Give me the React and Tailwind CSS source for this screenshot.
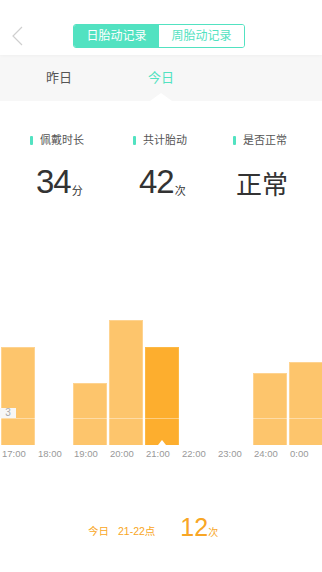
import React from 'react'

const bars = [
  { label: '17:00', h: 98 },
  { label: '18:00', h: 0 },
  { label: '19:00', h: 62 },
  { label: '20:00', h: 125 },
  { label: '21:00', h: 98, active: true },
  { label: '22:00', h: 0 },
  { label: '23:00', h: 0 },
  { label: '24:00', h: 72 },
  { label: '0:00', h: 83 },
]

const Stat = ({ label, value, unit }) => (
  <div className="flex flex-col">
    <div className="flex items-center h-[12px]">
      <span className="w-[3px] h-[9px] bg-[#52e2c1] rounded-[1px]" />
      <span className="ml-[7px] text-[11px] leading-none text-[#555]">{label}</span>
    </div>
    <div className="mt-[22px] pl-[6px] flex items-end h-[30px] text-[#333]">
      <span className="text-[33px] leading-none tracking-[-1px]">{value}</span>
      {unit && <span className="ml-[1px] text-[11px] leading-none mb-[1px]">{unit}</span>}
    </div>
  </div>
)

export default function App() {
  return (
    <div className="w-[322px] h-[572px] bg-white overflow-hidden" style={{ fontFamily: '"Liberation Sans", "Noto Sans CJK SC", sans-serif' }}>
      {/* header */}
      <div className="h-[55px] flex pt-[24px] shadow-[0_1px_3px_rgba(0,0,0,0.03)] relative z-10 bg-white">
        <svg width="12" height="20" viewBox="0 0 12 20" className="ml-[11px] mt-[2px]">
          <path d="M11 1 L2 10 L11 19" fill="none" stroke="#cfcfcf" strokeWidth="1.2" />
        </svg>
        <div className="ml-[50px] flex h-[24px] w-[172px] rounded-[3px] border border-[#52e2c1] overflow-hidden">
          <div className="flex-1 bg-[#52e2c1] text-white text-[12px] flex items-center justify-center">日胎动记录</div>
          <div className="flex-1 bg-white text-[#52e2c1] text-[12px] flex items-center justify-center">周胎动记录</div>
        </div>
      </div>

      {/* tabs */}
      <div className="h-[46px] bg-[#f7f7f7] flex pl-[8px] relative">
        <div className="w-[102px] flex items-center justify-center text-[13px] text-[#555]">昨日</div>
        <div className="w-[102px] flex items-center justify-center text-[13px] text-[#52e2c1] relative">
          今日
          <div className="absolute bottom-0 left-1/2 -translate-x-1/2 w-0 h-0 border-l-[11px] border-r-[11px] border-b-[8px] border-l-transparent border-r-transparent border-b-white" />
        </div>
      </div>

      {/* stats */}
      <div className="flex pt-[33px] pl-[30px]">
        <div className="w-[103px]"><Stat label="佩戴时长" value="34" unit="分" /></div>
        <div className="w-[100px]"><Stat label="共计胎动" value="42" unit="次" /></div>
        <div className="flex flex-col">
          <div className="flex items-center h-[12px]">
            <span className="w-[3px] h-[9px] bg-[#52e2c1] rounded-[1px]" />
            <span className="ml-[7px] text-[11px] leading-none text-[#555]">是否正常</span>
          </div>
          <div className="mt-[22px] pl-[3px] flex items-end h-[30px] text-[#333]">
            <span className="text-[26px] leading-none">正常</span>
          </div>
        </div>
      </div>

      {/* chart */}
      <div className="mt-[102px] relative">
        <div className="h-[145px] flex items-end">
          {bars.map((b) => (
            <div key={b.label} className="w-[36px] shrink-0 pl-[1px] pr-[1px] flex items-end h-full">
              {b.h > 0 && (
                <div
                  className={
                    b.active
                      ? 'w-full bg-[#fdae2e] border-t border-x border-[#fdb945] relative'
                      : 'w-full bg-[#fdc56c] border-t border-x border-[#fed390]'
                  }
                  style={{ height: b.h }}
                >
                  {b.active && (
                    <div className="absolute bottom-0 left-1/2 -translate-x-1/2 w-0 h-0 border-l-[4px] border-r-[4px] border-b-[5px] border-l-transparent border-r-transparent border-b-white" />
                  )}
                </div>
              )}
            </div>
          ))}
        </div>
        <div className="absolute left-0 right-0 top-[118px] h-[1px] bg-white/40" />
        <div className="absolute left-0 top-[108px] w-[16px] h-[10px] bg-[#f7f7f7] text-[10px] leading-[10px] text-[#aaa] text-center">3</div>
        <div className="flex mt-[2px]">
          {bars.map((b) => (
            <div key={b.label} className="w-[36px] shrink-0 pl-[2px] text-[9.5px] text-[#999] font-light">{b.label}</div>
          ))}
        </div>
      </div>

      {/* selection */}
      <div className="mt-[54px] flex items-end pl-[88px] text-[#f8a625]">
        <span className="text-[10.5px] leading-none mb-[4px]">今日</span>
        <span className="ml-[9px] text-[10.5px] leading-none mb-[4px]">21-22点</span>
        <span className="ml-[25px] text-[25px] leading-none">12</span>
        <span className="text-[10px] leading-none mb-[2px]">次</span>
      </div>
    </div>
  )
}
